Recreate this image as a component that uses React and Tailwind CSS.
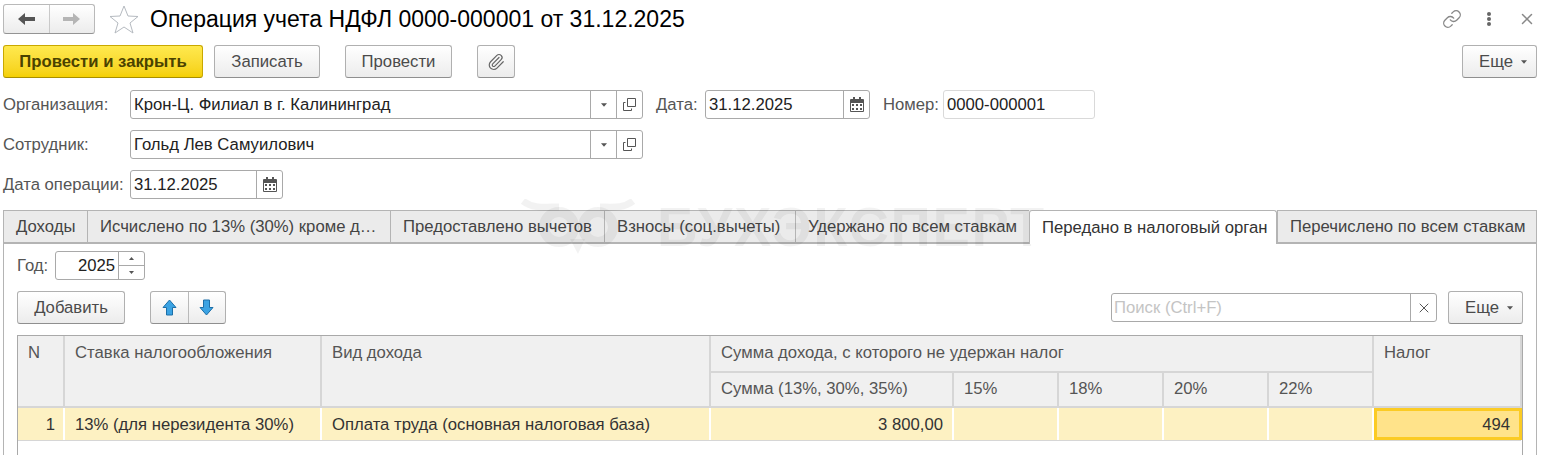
import React from 'react';
import { Link, X, Paperclip } from 'lucide-react';

const Caret = ({ className = '' }) => (
  <svg width="6" height="4" viewBox="0 0 7 4" className={className}><path d="M0 0h7L3.5 4z" fill="currentColor" /></svg>
);

const CopyIcon = () => (
  <svg width="13" height="13" viewBox="0 0 13 13" fill="none" stroke="#555" strokeWidth="1">
    <path d="M4.5 .5h8v8h-8z" />
    <path d="M2.5 4.5h-2v8h8v-2" />
  </svg>
);

const CalendarIcon = () => (
  <svg width="14" height="15" viewBox="0 0 14 15" fill="#555">
    <path d="M3 0h2v2h4V0h2v2h2a1 1 0 0 1 1 1v11a1 1 0 0 1-1 1H1a1 1 0 0 1-1-1V3a1 1 0 0 1 1-1h2z" />
    <path fill="#fff" d="M1 6h12v8H1z" />
    <path d="M2 7h2v2H2zM6 7h2v2H6zM10 7h2v2h-2zM2 11h2v2H2zM6 11h2v2H6zM10 11h2v2h-2z" />
  </svg>
);

const NavArrow = ({ right, className = '' }) => (
  <svg width="17" height="12" viewBox="0 0 17 12" fill="currentColor" className={`${right ? 'rotate-180' : ''} ${className}`}>
    <path d="M0 6L7 0v4h10v4H7v4z" />
  </svg>
);

const BlueArrow = ({ down }) => (
  <svg width="15" height="17" viewBox="0 0 15 17" className={down ? 'rotate-180' : ''}>
    <path d="M7.5 1L14 8.5H10.5V16H4.5V8.5H1z" fill="#3ba3e3" stroke="#1c6fa8" strokeWidth="1" strokeLinejoin="round" />
  </svg>
);

function Button({ children, className = '' }) {
  return (
    <div className={`flex h-[33px] items-center justify-center rounded-[3px] border border-[#b0b0b0] border-b-[#8f8f8f] bg-gradient-to-b from-white to-[#ececec] text-[#4b4b4b] ${className}`}>
      {children}
    </div>
  );
}

function MoreButton() {
  return (
    <Button className="w-[75px] gap-2 pl-[7px]">
      <span>Еще</span>
      <Caret className="text-[#555]" />
    </Button>
  );
}

function Field({ value, width, children }) {
  return (
    <div className={`flex h-[29px] items-center rounded-[3px] border border-[#a9a9a9] bg-white text-[#222] ${width}`}>
      <span className="flex-1 pl-[3px] whitespace-nowrap">{value}</span>
      {children}
    </div>
  );
}

const Cell = ({ className = '', children }) => (
  <div className={`flex h-full items-center justify-center border-l border-[#a9a9a9] ${className}`}>{children}</div>
);

function RefField({ value }) {
  return (
    <Field value={value} width="w-[513px]">
      <Cell className="w-[26px]"><Caret className="text-[#555]" /></Cell>
      <Cell className="w-[26px]"><CopyIcon /></Cell>
    </Field>
  );
}

function DateField({ width }) {
  return (
    <Field value="31.12.2025" width={width}>
      <Cell className="w-[26px]"><CalendarIcon /></Cell>
    </Field>
  );
}

function Tab({ children, width, active }) {
  if (active) {
    return (
      <div className={`relative z-10 -mb-px flex h-[34px] items-center rounded-t-[3px] border border-b-0 border-[#b4b4b4] bg-white pl-3 text-[#333] ${width}`}>
        {children}
      </div>
    );
  }
  return (
    <div className={`flex h-[33px] items-center border border-r-0 border-[#b4b4b4] bg-[#ebebeb] pl-3 text-[#444] last:border-r ${width}`}>
      <span className="whitespace-nowrap">{children}</span>
    </div>
  );
}

function Head({ children, className = '' }) {
  return <div className={`border-r-2 border-b-2 border-[#d6d6d6] bg-[#f0f0f0] pl-[10px] text-[#555] ${className}`}>{children}</div>;
}

function Data({ children, className = '' }) {
  return <div className={`flex items-center border-r-2 border-white bg-[#fdf1c2] px-[10px] text-[#333] ${className}`}>{children}</div>;
}

export default function App() {
  return (
    <div className="relative h-[455px] w-[1543px] overflow-hidden bg-white font-['Liberation_Sans',Arial,sans-serif] text-[16.7px] leading-[17px]">
      {/* Top bar */}
      <div className="flex h-[38px] items-center pl-[3px] pr-[7px]">
        <div className="flex h-[30px] w-[92px] rounded-[3px] border border-[#b9b9b9] border-b-[#949494] bg-gradient-to-b from-white to-[#ececec]">
          <div className="flex flex-1 items-center justify-center border-r border-[#c9c9c9]">
            <NavArrow className="text-[#555]" />
          </div>
          <div className="flex flex-1 items-center justify-center">
            <NavArrow right className="text-[#b5b5b5]" />
          </div>
        </div>
        <svg width="30" height="29" viewBox="0 0 30 29" fill="none" stroke="#b5bac0" strokeWidth="1" className="ml-[14px]">
          <path d="M15 1l4 10 10 .5-8 6.5 3 10-9-6-9 6 3-10-8-6.5L11 11z" />
        </svg>
        <h1 className="ml-[11px] text-[23px] font-normal text-black">Операция учета НДФЛ 0000-000001 от 31.12.2025</h1>
        <div className="ml-auto flex items-center text-[#888]">
          <Link size={20} strokeWidth={1.6} />
          <div className="ml-[25px] flex flex-col gap-[1px]">
            <span className="h-[4px] w-[4px] rounded-full bg-[#666]" />
            <span className="h-[4px] w-[4px] rounded-full bg-[#666]" />
            <span className="h-[4px] w-[4px] rounded-full bg-[#666]" />
          </div>
          <X size={18} strokeWidth={2} className="ml-[27px]" />
        </div>
      </div>

      {/* Command bar */}
      <div className="mt-[7px] flex pl-[3px] pr-[6px]">
        <div className="flex h-[33px] w-[200px] items-center justify-center rounded-[3px] border border-[#c9a800] border-b-[#a88e00] bg-gradient-to-b from-[#ffe94d] to-[#f5d000] font-bold text-[#4a4200]">
          Провести и закрыть
        </div>
        <Button className="ml-[11px] w-[106px]">Записать</Button>
        <Button className="ml-[25px] w-[107px]">Провести</Button>
        <Button className="ml-[25px] w-[38px]"><Paperclip size={18} strokeWidth={1.6} className="text-[#666]" /></Button>
        <div className="ml-auto"><MoreButton /></div>
      </div>

      {/* Form */}
      <div className="mt-[12px] flex flex-col gap-[11px] pl-[3px]">
        <div className="flex items-center">
          <span className="w-[127px] text-[#555]">Организация:</span>
          <RefField value="Крон-Ц. Филиал в г. Калининград" />
          <span className="ml-[13px] w-[49px] text-[#555]">Дата:</span>
          <DateField width="w-[165px]" />
          <span className="ml-[13px] w-[60px] text-[#555]">Номер:</span>
          <div className="flex h-[29px] w-[152px] items-center rounded-[3px] border border-[#d9d9d9] pl-[3px] text-[#222]">0000-000001</div>
        </div>
        <div className="flex items-center">
          <span className="w-[127px] text-[#555]">Сотрудник:</span>
          <RefField value="Гольд Лев Самуилович" />
        </div>
        <div className="flex items-center">
          <span className="w-[127px] whitespace-nowrap text-[#555]">Дата операции:</span>
          <DateField width="w-[153px]" />
        </div>
      </div>

      {/* Tabs */}
      <div className="mt-[11px] ml-[3px] mr-[6px]">
        <div className="flex">
          <Tab width="w-[84px]">Доходы</Tab>
          <Tab width="w-[303px]">Исчислено по 13% (30%) кроме д…</Tab>
          <Tab width="w-[214px]">Предоставлено вычетов</Tab>
          <Tab width="w-[191px]">Взносы (соц.вычеты)</Tab>
          <Tab width="w-[234px]">Удержано по всем ставкам</Tab>
          <Tab width="w-[248px]" active>Передано в налоговый орган</Tab>
          <Tab width="w-[260px]">Перечислено по всем ставкам</Tab>
        </div>

        <div className="h-[220px] border border-b-0 border-[#b4b4b4] px-[13px]">
          <div className="flex items-center pt-[7px]">
            <span className="w-[38px] text-[#555]">Год:</span>
            <div className="flex h-[29px] w-[90px] items-center rounded-[3px] border border-[#a9a9a9] text-[#222]">
              <span className="flex-1 pr-[3px] text-right">2025</span>
              <div className="flex h-full w-[26px] flex-col border-l border-[#a9a9a9] text-[#555]">
                <div className="flex flex-1 items-center justify-center border-b border-[#a9a9a9]"><Caret className="h-[3px] w-[5px] rotate-180" /></div>
                <div className="flex flex-1 items-center justify-center"><Caret className="h-[3px] w-[5px]" /></div>
              </div>
            </div>
          </div>

          <div className="mt-[11px] flex items-center">
            <Button className="w-[108px]">Добавить</Button>
            <Button className="ml-[25px] w-[76px]">
              <div className="flex h-full flex-1 items-center justify-center border-r border-[#b9b9b9]"><BlueArrow /></div>
              <div className="flex h-full flex-1 items-center justify-center"><BlueArrow down /></div>
            </Button>
            <div className="ml-auto flex h-[29px] w-[326px] items-center rounded-[3px] border border-[#a9a9a9]">
              <span className="flex-1 pl-[2px] text-[#c4c4c4]">Поиск (Ctrl+F)</span>
              <Cell className="w-[26px]"><X size={16} strokeWidth={1.5} className="text-[#555]" /></Cell>
            </div>
            <div className="ml-[11px]"><MoreButton /></div>
          </div>

          {/* Table */}
          <div className="mt-[11px] h-[120px] border-x border-t border-[#a9a9a9] pr-[1px]">
            <div className="grid h-[72px] grid-cols-[47px_257px_389px_243px_105px_105px_105px_105px_148px] grid-rows-[37px_35px]">
              <Head className="row-span-2 pt-[8px]">N</Head>
              <Head className="row-span-2 pt-[8px]">Ставка налогообложения</Head>
              <Head className="row-span-2 pt-[8px]">Вид дохода</Head>
              <Head className="col-span-5 pt-[8px]">Сумма дохода, с которого не удержан налог</Head>
              <Head className="row-span-2 pt-[8px]">Налог</Head>
              <Head className="pt-[7px]">Сумма (13%, 30%, 35%)</Head>
              <Head className="pt-[7px]">15%</Head>
              <Head className="pt-[7px]">18%</Head>
              <Head className="pt-[7px]">20%</Head>
              <Head className="pt-[7px]">22%</Head>
            </div>
            <div className="grid h-[33px] grid-cols-[47px_257px_389px_243px_105px_105px_105px_105px_148px] border-b border-[#d6d6d6]">
              <Data className="justify-end pr-[8px]">1</Data>
              <Data>13% (для нерезидента 30%)</Data>
              <Data>Оплата труда (основная налоговая база)</Data>
              <Data className="justify-end pr-[9px]">3 800,00</Data>
              <Data />
              <Data />
              <Data />
              <Data />
              <div className="flex items-center justify-end border-[3px] border-[#fbcb24] bg-[#ffe38a] pr-[9px] text-[#333]">494</div>
            </div>
          </div>
        </div>
      </div>

      {/* Watermark */}
      <div className="pointer-events-none absolute top-[199px] left-[520px] flex items-start gap-[21px] text-black/[0.05]">
        <svg width="116" height="58" viewBox="0 0 116 58" fill="none" stroke="currentColor">
          <circle cx="39" cy="28" r="15" strokeWidth="10" />
          <circle cx="78" cy="28" r="15" strokeWidth="10" />
          <path d="M3 2c10 8 22 6 36 6M113 2c-10 8-22 6-33 6" strokeWidth="7" />
          <path d="M50 40l8 15 7-15z" fill="currentColor" strokeWidth="0" />
        </svg>
        <span className="text-[56px] leading-none font-bold tracking-[1.7px] whitespace-nowrap">БУХЭКСПЕРТ</span>
      </div>
    </div>
  );
}
